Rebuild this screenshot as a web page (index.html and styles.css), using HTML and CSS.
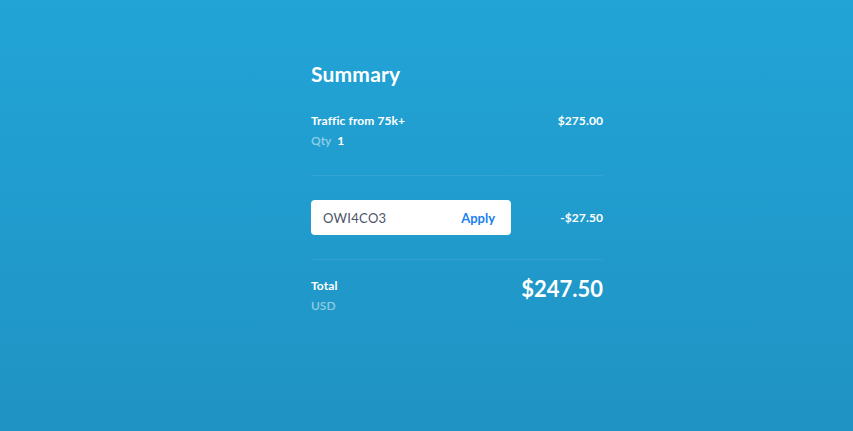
FILE: index.html
```html
<!DOCTYPE html>
<html>
<head>
<meta charset="utf-8">
<link rel="stylesheet" href="styles.css">
</head>
<body>
<main class="page">
  <section class="summary">
    <h1 class="title">Summary</h1>
    <div class="row item">
      <div class="col">
        <div class="label">Traffic from 75k+</div>
        <div class="qty"><span class="muted">Qty</span><span class="qty-num">1</span></div>
      </div>
      <div class="amount">$275.00</div>
    </div>
    <div class="row coupon">
      <div class="coupon-box">
        <span class="code">OWI4CO3</span>
        <span class="apply">Apply</span>
      </div>
      <div class="amount">-$27.50</div>
    </div>
    <div class="row total">
      <div class="col">
        <div class="label">Total</div>
        <div class="muted currency">USD</div>
      </div>
      <div class="grand">$247.50</div>
    </div>
  </section>
</main>
</body>
</html>
```
FILE: styles.css
```css
* { box-sizing: border-box; }
html, body { margin: 0; height: 100%; }
body {
  background: linear-gradient(180deg, #22a4d7 0%, #1f93c3 100%);
  font-family: Lato, "Open Sans", sans-serif;
  color: #fff;
}
.page {
  display: flex;
  justify-content: center;
  padding-top: 60px;
}
.summary {
  width: 292px;
  margin-left: 61px;
}
.title {
  margin: 0;
  font-size: 21px;
  font-weight: 700;
  line-height: 28px;
  letter-spacing: 0.2px;
}
.row {
  display: flex;
  justify-content: space-between;
}
.item {
  margin-top: 25px;
  padding-bottom: 26px;
  border-bottom: 1px solid rgba(255,255,255,0.08);
}
.label {
  font-size: 12px;
  font-weight: 700;
  line-height: 16px;
  letter-spacing: 0.1px;
}
.amount {
  font-size: 12px;
  font-weight: 700;
  line-height: 16px;
  letter-spacing: 0.1px;
}
.qty {
  margin-top: 4px;
  font-size: 12px;
  line-height: 16px;
  font-weight: 700;
}
.muted {
  color: rgba(255,255,255,0.5);
  font-weight: 600;
  font-size: 12px;
}
.qty-num { margin-left: 6px; }
.coupon {
  align-items: center;
  padding: 24px 0 24px;
  border-bottom: 1px solid rgba(255,255,255,0.08);
}
.coupon-box {
  width: 200px;
  height: 35px;
  background: #fff;
  border-radius: 4px;
  display: flex;
  align-items: center;
  justify-content: space-between;
  padding: 0 16px 0 12px;
}
.code {
  color: #4a5468;
  font-size: 13px;
  letter-spacing: 0.3px;
}
.apply {
  color: #1a7ff0;
  font-size: 13px;
  font-weight: 700;
}
.total {
  padding-top: 18px;
  align-items: flex-start;
}
.currency {
  margin-top: 4px;
  line-height: 16px;
}
.grand {
  font-size: 22px;
  font-weight: 700;
  line-height: 28px;
  margin-top: -3px;
}
```
